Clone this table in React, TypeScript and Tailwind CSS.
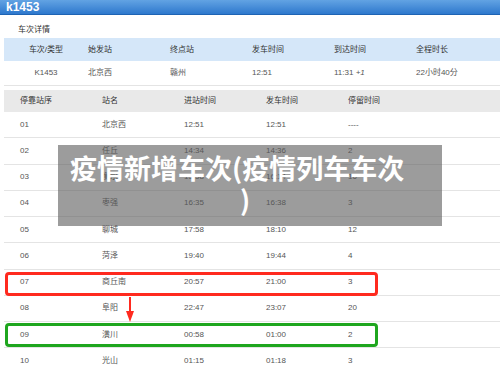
const trip = ['K1453', '北京西', '赣州', '12:51', '11:31', '22小时40分']

const stops = [
  ['01', '北京西', '12:51', '12:51', '----'],
  ['02', '任丘', '14:34', '14:36', '2'],
  ['03', '衡水', '15:58', '16:14', '16'],
  ['04', '枣强', '16:35', '16:38', '3'],
  ['05', '聊城', '17:58', '18:10', '12'],
  ['06', '菏泽', '19:40', '19:44', '4'],
  ['07', '商丘南', '20:57', '21:00', '3'],
  ['08', '阜阳', '22:47', '23:07', '20'],
  ['09', '潢川', '00:58', '01:00', '2'],
  ['10', '光山', '01:15', '01:18', '3'],
]

export default function App() {
  return (
    <div className="relative w-[500px] h-[372px] overflow-hidden bg-white font-['Liberation_Sans','Noto_Sans_CJK_SC',sans-serif]">
      <div className="h-[15px] bg-gradient-to-b from-[#62a3e3] to-[#2d78cd] border-b border-[#1e63b3] px-[6px] text-white font-bold text-[12px] leading-[14px]">
        k1453
      </div>

      <div className="h-[23px] pl-[18px] pt-[10px] text-[8px] leading-[10px] text-[#333]">车次详情</div>

      {/* summary table */}
      <div className="ml-[4px] text-[8px] leading-none">
        <div className="h-[23px] bg-[#d5e7f9] flex items-center text-[#333]">
          <div className="w-[84px] text-center">车次/类型</div>
          <div className="w-[82px]">始发站</div>
          <div className="w-[82px]">终点站</div>
          <div className="w-[82px]">发车时间</div>
          <div className="w-[82px]">到达时间</div>
          <div className="w-[82px]">全程时长</div>
        </div>
        <div className="h-[25px] flex items-center border-b border-[#e4e4e4] text-[#555]">
          <div className="w-[84px] text-center">{trip[0]}</div>
          <div className="w-[82px]">{trip[1]}</div>
          <div className="w-[82px]">{trip[2]}</div>
          <div className="w-[82px]">{trip[3]}</div>
          <div className="w-[82px]">
            {trip[4]} <span className="italic">+1</span>
          </div>
          <div className="w-[82px]">{trip[5]}</div>
        </div>
      </div>

      <div className="h-[4px]" />

      {/* stops table */}
      <div className="ml-[4px] text-[8px] leading-none">
        <div className="h-[22px] bg-[#e9e9e9] flex items-center pl-[16px] text-[#333]">
          <div className="w-[82px]">停靠站序</div>
          <div className="w-[82px]">站名</div>
          <div className="w-[82px]">进站时间</div>
          <div className="w-[82px]">发车时间</div>
          <div className="w-[82px]">停留时间</div>
        </div>
        {stops.map((s) => (
          <div key={s[0]} className="relative h-[26.25px] flex items-center pl-[16px] border-b border-[#e4e4e4] text-[#555]">
            <div className="w-[82px]">{s[0]}</div>
            <div className="w-[82px]">{s[1]}</div>
            <div className="w-[82px]">{s[2]}</div>
            <div className="w-[82px]">{s[3]}</div>
            <div className="w-[82px]">{s[4]}</div>
            {s[0] === '07' && (
              <div className="absolute left-[1px] top-[2px] w-[373px] h-[24px] border-[3px] border-[#ff2a1f] rounded-[4px]" />
            )}
            {s[0] === '09' && (
              <div className="absolute left-[1px] top-[1px] w-[373px] h-[24px] border-[3px] border-[#1fa61f] rounded-[4px]" />
            )}
          </div>
        ))}
      </div>

      {/* arrow between the highlighted rows */}
      <svg className="absolute left-[125px] top-[297px]" width="10" height="26" viewBox="0 0 10 26">
        <line x1="5" y1="0" x2="5" y2="16" stroke="#ff2a1f" strokeWidth="2" />
        <polygon points="1,14 9,14 5,25" fill="#ff2a1f" />
      </svg>

      {/* title overlay */}
      <div className="absolute left-[58px] top-[145px] w-[384px] h-[81px] bg-[rgba(90,90,90,0.6)] pt-[7px] text-white font-bold text-[27px] leading-[32px] font-['Noto_Sans_CJK_SC',sans-serif]">
        <div className="pl-[12px] whitespace-nowrap">疫情新增车次(疫情列车车次</div>
        <div className="text-center pr-[10px]">)</div>
      </div>
    </div>
  )
}
